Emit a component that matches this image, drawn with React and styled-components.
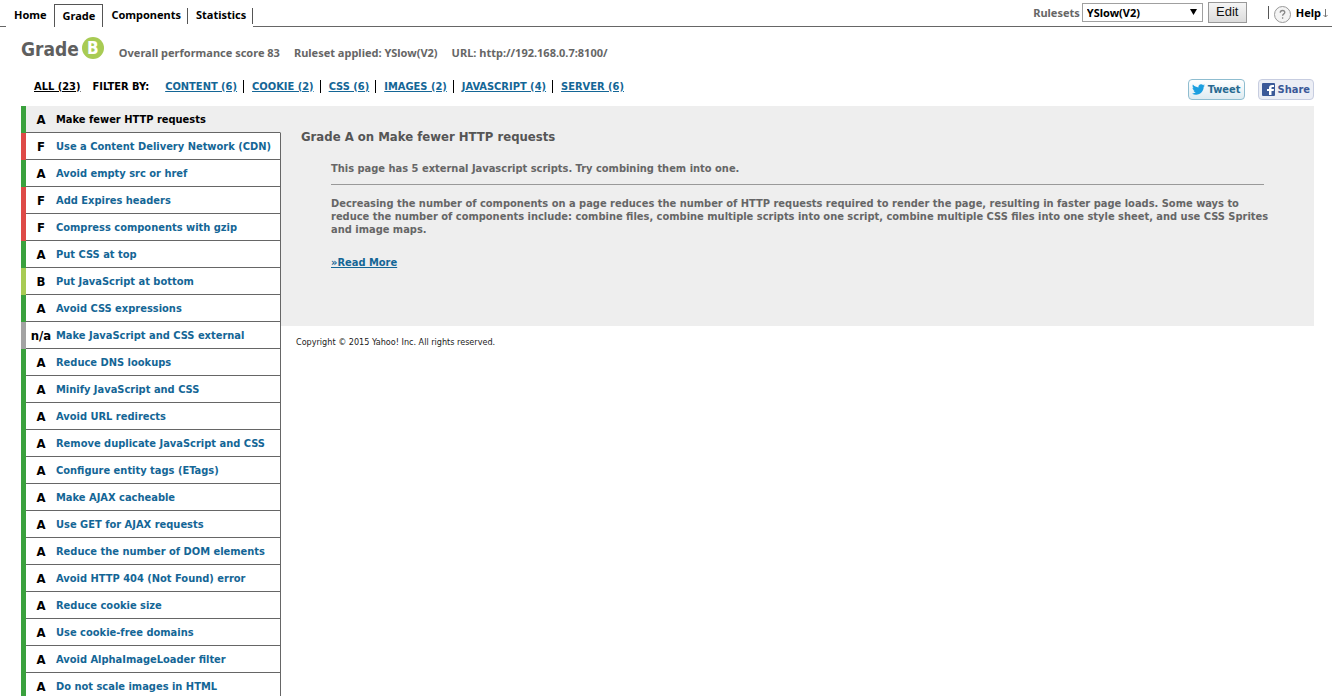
import React, { useState } from "react";
import styled, { createGlobalStyle } from "styled-components";

const GRADE_COLORS = { A: "#3aa13d", B: "#a8cb54", F: "#de4a47", "n/a": "#a3a3a3" };
const COMPACT_FONT = `"Noto Sans", "Open Sans", sans-serif`;

const RULES = [
  ["A", "Make fewer HTTP requests"],
  ["F", "Use a Content Delivery Network (CDN)"],
  ["A", "Avoid empty src or href"],
  ["F", "Add Expires headers"],
  ["F", "Compress components with gzip"],
  ["A", "Put CSS at top"],
  ["B", "Put JavaScript at bottom"],
  ["A", "Avoid CSS expressions"],
  ["n/a", "Make JavaScript and CSS external"],
  ["A", "Reduce DNS lookups"],
  ["A", "Minify JavaScript and CSS"],
  ["A", "Avoid URL redirects"],
  ["A", "Remove duplicate JavaScript and CSS"],
  ["A", "Configure entity tags (ETags)"],
  ["A", "Make AJAX cacheable"],
  ["A", "Use GET for AJAX requests"],
  ["A", "Reduce the number of DOM elements"],
  ["A", "Avoid HTTP 404 (Not Found) error"],
  ["A", "Reduce cookie size"],
  ["A", "Use cookie-free domains"],
  ["A", "Avoid AlphaImageLoader filter"],
  ["A", "Do not scale images in HTML"],
];

const FILTERS = ["CONTENT (6)", "COOKIE (2)", "CSS (6)", "IMAGES (2)", "JAVASCRIPT (4)", "SERVER (6)"];

const GlobalStyle = createGlobalStyle`
  * { box-sizing: border-box; }
  body {
    margin: 0;
    background: #fff;
    color: #000;
    font-family: Tahoma, "DejaVu Sans Condensed", "DejaVu Sans", sans-serif;
    font-size: 11px;
    font-weight: bold;
    line-height: 13px;
  }
`;

const Page = styled.div`
  height: 100vh;
  overflow: hidden;
`;

const Header = styled.header`
  display: flex;
  height: 27px;
  font-family: ${COMPACT_FONT};
`;

const HeaderEdge = styled.div`
  width: 6px;
  border-bottom: 1px solid #666;
`;

const Tabs = styled.nav`
  display: flex;
  align-items: center;
  padding-top: 4px;
`;

const Tab = styled.a`
  padding: 0 6px 2px 8px;
  line-height: 14px;
  color: #000;
  text-decoration: none;
  border-right: ${(p) => (p.$divider ? "1px solid #555" : "0")};
`;

const ActiveTab = styled(Tab)`
  align-self: stretch;
  margin-left: 1px;
  padding: 4px 7px 0 8px;
  border: 1px solid #555;
  border-bottom: 0;
`;

const Tools = styled.div`
  flex: 1;
  display: flex;
  align-items: center;
  justify-content: flex-end;
  padding: 0 2px 2px 0;
  border-bottom: 1px solid #666;
`;

const RulesetLabel = styled.label`
  margin-right: 2px;
  color: #666;
`;

const SelectBox = styled.div`
  position: relative;
  display: flex;
`;

const Select = styled.select`
  appearance: none;
  width: 121px;
  height: 19px;
  padding: 0 4px;
  border: 1px solid #a0a0a0;
  border-radius: 0;
  background: #fff;
  color: #000;
  font: inherit;
`;

const Caret = styled.svg`
  position: absolute;
  top: 6px;
  right: 6px;
  pointer-events: none;
`;

const EditButton = styled.button`
  width: 39px;
  height: 21px;
  margin: 0 21px 0 5px;
  padding: 0;
  border: 1px solid #999;
  background: linear-gradient(#f5f5f5, #dcdcdc);
  color: #111;
  font: 13px/18px "Liberation Sans", Arial, sans-serif;
`;

const HelpLink = styled.a`
  display: flex;
  align-items: center;
  color: #000;
  text-decoration: none;
`;

const Bar = styled.span`
  width: 1px;
  height: 13px;
  background: ${(p) => p.$color || "#000"};
`;

const HelpIcon = styled.svg`
  margin: 4px 5px 0 5px;
`;

const HelpArrow = styled.svg`
  margin: 3px 2px 0 2px;
`;

const Summary = styled.section`
  display: flex;
  align-items: center;
  height: 42px;
  padding-left: 21px;
  color: #666;
`;

const Title = styled.h1`
  margin: 0;
  padding-top: 2px;
  color: #5f5f5f;
  font-size: 19px;
  line-height: 24px;
`;

const GradeBadge = styled.span`
  width: 22px;
  height: 22px;
  margin: 0 15px 0 3px;
  border-radius: 50%;
  background: #a8cb54;
  color: #fff;
  font-size: 17px;
  line-height: 22px;
  text-align: center;
`;

const Fact = styled.span`
  margin-right: 14px;
  padding-top: 8px;
  font-family: ${COMPACT_FONT};
`;

const Toolbar = styled.div`
  display: flex;
  align-items: center;
  height: 37px;
  padding: 0 18px 3px 34px;
`;

const FilterLink = styled.a`
  color: ${(p) => (p.$current ? "#000" : "#146696")};
  text-decoration: underline;
`;

const FilterCaption = styled.span`
  margin: 0 16px 0 12px;
`;

const FilterList = styled.ul`
  display: flex;
  margin: 0;
  padding: 0;
  list-style: none;
`;

const FilterItem = styled.li`
  display: flex;
  &:not(:last-child) {
    margin-right: 8px;
    padding-right: 6px;
    border-right: 1px solid #000;
  }
`;

const ShareGroup = styled.div`
  display: flex;
  gap: 13px;
  margin: 6px 0 0 auto;
`;

const ShareButton = styled.button`
  display: flex;
  align-items: center;
  gap: 3px;
  height: 21px;
  padding: 0 3px;
  border: 1px solid ${(p) => (p.$facebook ? "#c7cde0" : "#8fbdd0")};
  border-radius: 4px;
  background: ${(p) => (p.$facebook ? "#eceef5" : "linear-gradient(#fff, #deebf1)")};
  color: ${(p) => (p.$facebook ? "#3b5998" : "#286a91")};
  font: inherit;
`;

const Report = styled.main`
  display: flex;
  align-items: flex-start;
  padding: 0 18px 0 21px;
`;

const RuleList = styled.ul`
  flex: 0 0 260px;
  margin: 0;
  padding: 0;
  list-style: none;
`;

const RuleRow = styled.li`
  height: 27px;
  border-left: 5px solid ${(p) => GRADE_COLORS[p.$grade]};
`;

const RuleLink = styled.a`
  display: flex;
  align-items: center;
  height: 27px;
  border-bottom: 1px solid #666;
  border-right: 1px solid ${(p) => (p.$current ? "#eee" : "#666")};
  background: ${(p) => (p.$current ? "#eee" : "#fff")};
  color: ${(p) => (p.$current ? "#000" : "#146696")};
  text-decoration: none;
  white-space: nowrap;
`;

const RuleGrade = styled.span`
  width: 30px;
  color: #000;
  font-size: 13px;
  text-align: center;
`;

const Content = styled.div`
  flex: 1;
  min-width: 0;
`;

const Detail = styled.article`
  min-height: 220px;
  padding: 23px 40px 0 20px;
  background: #eee;
  color: #666;
`;

const DetailTitle = styled.h2`
  margin: 0;
  color: #555;
  font-size: 13px;
  line-height: 16px;
`;

const DetailBody = styled.div`
  padding: 17px 0 0 30px;
`;

const Finding = styled.p`
  margin: 0 10px 0 0;
  padding-bottom: 9px;
  border-bottom: 1px solid #999;
`;

const Explanation = styled.p`
  margin: 12px 0 20px;
`;

const Copyright = styled.footer`
  padding: 10px 15px;
  color: #222;
  font-size: 9px;
  font-weight: normal;
`;

function TwitterIcon() {
  return (
    <svg width="13" height="11" viewBox="0 0 24 20" fill="#1b9fe0" aria-hidden="true">
      <path d="M24 2.4c-.9.4-1.8.7-2.8.8 1-.6 1.8-1.6 2.2-2.7-1 .6-2 1-3.1 1.2A4.9 4.9 0 0 0 12 6.200C7.900 6 4.300 4 1.700.9.400 3.100 1 6 3.200 7.500c-.8 0-1.600-.2-2.200-.6 0 2.300 1.600 4.400 3.900 4.900-.7.2-1.500.2-2.200.1.600 2 2.400 3.300 4.600 3.400A9.900 9.900 0 0 1 0 17.300 13.900 13.900 0 0 0 7.500 19.500c9.100 0 14.300-7.700 14-14.600 1-.7 1.800-1.600 2.500-2.500z" />
    </svg>
  );
}

function FacebookIcon() {
  return (
    <svg width="13" height="13" viewBox="0 0 13 13" aria-hidden="true">
      <rect width="13" height="13" rx="1" fill="#3b5998" />
      <path d="M7 12V8H5V6h2V5c0-2 1-3 3-3h2v2h-1.500C9.700 4 9.500 4.300 9.500 5v1H12l-.3 2H9.500v4z" fill="#fff" />
    </svg>
  );
}

export default function App() {
  const [selected, setSelected] = useState(0);
  return (
    <Page>
      <GlobalStyle />
      <Header>
        <HeaderEdge />
        <Tabs>
          <Tab href="#home">Home</Tab>
          <ActiveTab href="#grade">Grade</ActiveTab>
          <Tab href="#components" $divider>Components</Tab>
          <Tab href="#statistics" $divider>Statistics</Tab>
        </Tabs>
        <Tools>
          <RulesetLabel htmlFor="ruleset">Rulesets</RulesetLabel>
          <SelectBox>
            <Select id="ruleset" defaultValue="v2">
              <option value="v2">YSlow(V2)</option>
            </Select>
            <Caret width="7" height="6" viewBox="0 0 7 6" aria-hidden="true">
              <path d="M0 0h7L3.500 6z" />
            </Caret>
          </SelectBox>
          <EditButton type="button">Edit</EditButton>
          <Bar $color="#555" />
          <HelpLink href="#help">
            <HelpIcon width="17" height="17" viewBox="0 0 17 17" aria-hidden="true">
              <circle cx="8.500" cy="8.500" r="8" fill="#f4f4f4" stroke="#999" />
              <path d="M6.200 6.700C6.300 5.200 7.200 4.500 8.500 4.500s2.300.7 2.300 1.900c0 1.500-2.200 1.500-2.200 3.400M8.600 11.300v1.500" fill="none" stroke="#888" strokeWidth="1.300" />
            </HelpIcon>
            Help
            <HelpArrow width="5" height="9" viewBox="0 0 5 9" aria-hidden="true">
              <path d="M2.500 0v8M.5 6l2 2 2-2" fill="none" stroke="#777" />
            </HelpArrow>
          </HelpLink>
        </Tools>
      </Header>

      <Summary>
        <Title>Grade</Title>
        <GradeBadge>B</GradeBadge>
        <Fact>Overall performance score 83</Fact>
        <Fact>Ruleset applied: YSlow(V2)</Fact>
        <Fact>URL: http://192.168.0.7:8100/</Fact>
      </Summary>

      <Toolbar>
        <FilterLink href="#all" $current>ALL (23)</FilterLink>
        <FilterCaption>FILTER BY:</FilterCaption>
        <FilterList>
          {FILTERS.map((name) => (
            <FilterItem key={name}>
              <FilterLink href="#filter">{name}</FilterLink>
            </FilterItem>
          ))}
        </FilterList>
        <ShareGroup>
          <ShareButton type="button"><TwitterIcon />Tweet</ShareButton>
          <ShareButton type="button" $facebook><FacebookIcon />Share</ShareButton>
        </ShareGroup>
      </Toolbar>

      <Report>
        <RuleList>
          {RULES.map(([grade, name], i) => (
            <RuleRow key={name} $grade={grade}>
              <RuleLink href="#rule" $current={i === selected} onClick={() => setSelected(i)}>
                <RuleGrade>{grade}</RuleGrade>
                {name}
              </RuleLink>
            </RuleRow>
          ))}
        </RuleList>
        <Content>
          <Detail>
            <DetailTitle>Grade {RULES[selected][0]} on {RULES[selected][1]}</DetailTitle>
            <DetailBody>
              <Finding>This page has 5 external Javascript scripts. Try combining them into one.</Finding>
              <Explanation>
                Decreasing the number of components on a page reduces the number of HTTP requests required to
                render the page, resulting in faster page loads. Some ways to reduce the number of components
                include: combine files, combine multiple scripts into one script, combine multiple CSS files
                into one style sheet, and use CSS Sprites and image maps.
              </Explanation>
              <FilterLink href="#more">»Read More</FilterLink>
            </DetailBody>
          </Detail>
          <Copyright>Copyright © 2015 Yahoo! Inc. All rights reserved.</Copyright>
        </Content>
      </Report>
    </Page>
  );
}
